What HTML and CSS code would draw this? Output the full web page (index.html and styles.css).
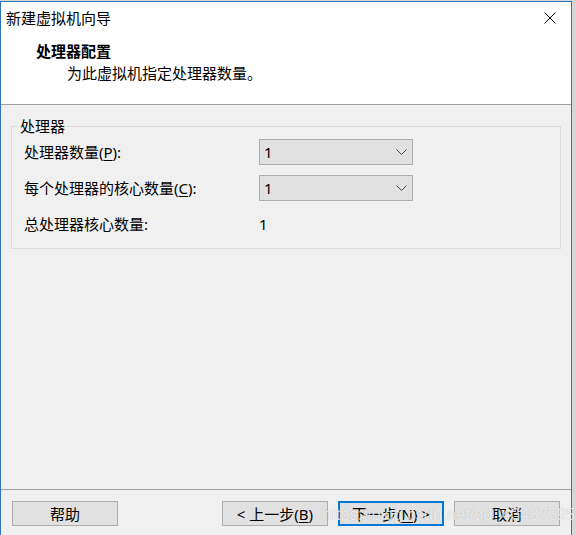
FILE: index.html
```html
<!DOCTYPE html>
<html lang="zh-CN">
<head>
<meta charset="utf-8">
<title>新建虚拟机向导</title>
<link rel="stylesheet" href="styles.css">
</head>
<body>
<div class="window">
  <div class="titlebar">
    <span class="title">新建虚拟机向导</span>
    <svg class="close" width="12" height="12" viewBox="0 0 12 12"><path d="M0.5 0.5 L11.5 11.5 M11.5 0.5 L0.5 11.5" stroke="#000" stroke-width="1" fill="none"/></svg>
  </div>
  <div class="header">
    <div class="h-title">处理器配置</div>
    <div class="h-sub">为此虚拟机指定处理器数量。</div>
  </div>
  <div class="main">
    <fieldset class="group">
      <legend>处理器</legend>
      <div class="row">
        <span class="label">处理器数量(<u>P</u>):</span>
        <div class="combo"><span>1</span><svg width="11" height="6" viewBox="0 0 11 6"><path d="M0.5 0.5 L5.5 5.5 L10.5 0.5" stroke="#4a4a4a" stroke-width="1" fill="none"/></svg></div>
      </div>
      <div class="row">
        <span class="label">每个处理器的核心数量(<u>C</u>):</span>
        <div class="combo"><span>1</span><svg width="11" height="6" viewBox="0 0 11 6"><path d="M0.5 0.5 L5.5 5.5 L10.5 0.5" stroke="#4a4a4a" stroke-width="1" fill="none"/></svg></div>
      </div>
      <div class="row">
        <span class="label">总处理器核心数量:</span>
        <span class="value">1</span>
      </div>
    </fieldset>
  </div>
  <div class="footer">
    <button class="btn">帮助</button>
    <div class="right">
      <button class="btn">&lt; 上一步(<u>B</u>)</button>
      <button class="btn default">下一步(<u>N</u>) &gt;</button>
      <button class="btn">取消</button>
    </div>
    <span class="watermark">https://blog.csdn.net/qq_43487595</span>
  </div>
</div>
</body>
</html>
```
FILE: styles.css
```css
html, body {
  margin: 0;
  padding: 0;
}
body {
  width: 576px;
  height: 535px;
  overflow: hidden;
  background: #d6d6d6;
  font-family: "Noto Sans", "Noto Sans CJK SC", sans-serif;
  font-size: 15px;
  color: #000;
}
.window {
  margin-top: 1px;
  width: 570px;
  height: 533px;
  border: 1px solid #2e74bd;
  border-bottom: none;
  background: #f0f0f0;
  display: flex;
  flex-direction: column;
}
.titlebar {
  height: 31px;
  background: #fff;
  display: flex;
  align-items: center;
  padding: 0 15px 0 5px;
}
.title {
  line-height: 20px;
}
.close {
  margin-left: auto;
  display: block;
}
.header {
  background: #fff;
  height: 72px;
  box-sizing: border-box;
  padding: 8px 0 0 35px;
  border-bottom: 1px solid #a0a0a0;
}
.h-title {
  font-weight: bold;
  line-height: 20px;
}
.h-sub {
  margin: 2px 0 0 31px;
  line-height: 20px;
}
.main {
  flex: 1;
  padding: 11px 10px 0 10px;
}
.group {
  margin: 0;
  padding: 3px 12px 11px 12px;
  border: 1px solid #dcdcdc;
  display: flex;
  flex-direction: column;
  gap: 10px;
  min-width: 0;
}
.group legend {
  margin-left: -6px;
  padding: 0 2px;
  line-height: 20px;
}
.row {
  height: 26px;
  display: flex;
  align-items: center;
}
.label {
  width: 235px;
  line-height: 20px;
}
.label u, .btn u {
  text-decoration-thickness: 1px;
  text-underline-offset: 2px;
}
.combo {
  width: 154px;
  height: 26px;
  box-sizing: border-box;
  border: 1px solid #adadad;
  background: #e1e1e1;
  display: flex;
  align-items: center;
  justify-content: space-between;
  padding: 0 5px 0 4px;
}
.combo span {
  line-height: 20px;
}
.combo svg {
  display: block;
}
.value {
  line-height: 20px;
}
.footer {
  position: relative;
  border-top: 1px solid #a0a0a0;
  padding: 11px 11px 9px 11px;
  display: flex;
  justify-content: space-between;
  align-items: center;
}
.right {
  display: flex;
  gap: 10px;
}
.btn {
  width: 106px;
  height: 25px;
  box-sizing: border-box;
  border: 1px solid #adadad;
  background: #e1e1e1;
  font-family: inherit;
  font-size: 15px;
  color: #000;
  padding: 0;
  margin: 0;
  line-height: 20px;
}
.btn.default {
  border: 2px solid #0078d7;
}
.watermark {
  position: absolute;
  left: 321px;
  top: 15px;
  font-family: "Liberation Sans", sans-serif;
  font-size: 16.5px;
  color: rgba(255, 255, 255, 0.75);
  text-shadow: 0 0 1px rgba(0, 0, 0, 0.25);
  pointer-events: none;
  white-space: nowrap;
}
```
